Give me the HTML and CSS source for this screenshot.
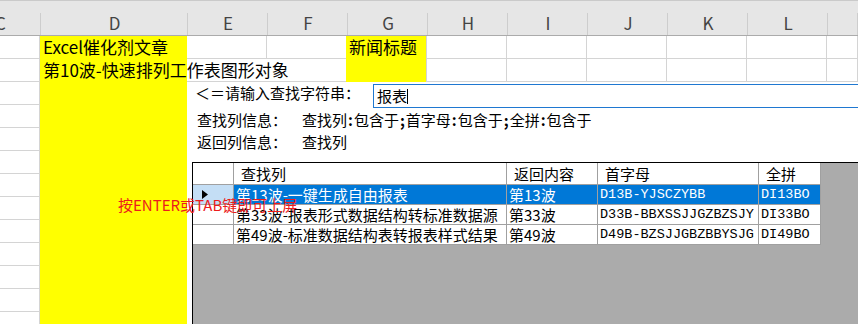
FILE: index.html
```html
<!DOCTYPE html>
<html lang="zh-CN">
<head>
<meta charset="UTF-8">
<title>Excel催化剂 - 快速查找</title>
<link rel="stylesheet" href="styles.css">
</head>
<body>
<div class="sheet">
  <div class="col-heads">
    <div class="col-head w-c">C</div>
    <div class="col-head w-d">D</div>
    <div class="col-head">E</div>
    <div class="col-head">F</div>
    <div class="col-head">G</div>
    <div class="col-head">H</div>
    <div class="col-head">I</div>
    <div class="col-head">J</div>
    <div class="col-head">K</div>
    <div class="col-head">L</div>
    <div class="col-head rest"></div>
  </div>
  <div class="cols">
    <div class="col w-c"></div>
    <div class="col w-d fill">
      <div class="cell">Excel催化剂文章</div>
      <div class="cell spill">第10波-快速排列工作表图形对象</div>
    </div>
    <div class="col"></div>
    <div class="col"></div>
    <div class="col"><div class="merge fill"><div class="cell">新闻标题</div></div></div>
    <div class="col"></div>
    <div class="col"></div>
    <div class="col"></div>
    <div class="col"></div>
    <div class="col"></div>
    <div class="col rest"></div>
  </div>
</div>

<div class="finder">
  <div class="search">
    <div class="search-label">＜＝请输入查找字符串：</div>
    <div class="search-box">报表<span class="caret"></span></div>
  </div>
  <div class="info first">
    <div>查找列信息：</div>
    <div>查找列<span class="p">:</span>包含于<span class="p">;</span>首字母<span class="p">:</span>包含于<span class="p">;</span>全拼<span class="p">:</span>包含于</div>
  </div>
  <div class="info">
    <div>返回列信息：</div>
    <div>查找列</div>
  </div>
  <div class="grid-wrap">
    <div class="dgv">
      <div class="rh"></div>
      <div class="ch">查找列</div>
      <div class="ch">返回内容</div>
      <div class="ch">首字母</div>
      <div class="ch">全拼</div>

      <div class="rh current"><svg width="6" height="9" viewBox="0 0 6 9"><path d="M0 0 L6 4.5 L0 9 Z" fill="#000"/></svg></div>
      <div class="sel">第13波-一键生成自由报表</div>
      <div class="sel">第13波</div>
      <div class="sel code">D13B-YJSCZYBB</div>
      <div class="sel code">DI13BO</div>

      <div class="rh"></div>
      <div>第33波-报表形式数据结构转标准数据源</div>
      <div>第33波</div>
      <div class="code">D33B-BBXSSJJGZBZSJY</div>
      <div class="code">DI33BO</div>

      <div class="rh"></div>
      <div>第49波-标准数据结构表转报表样式结果</div>
      <div>第49波</div>
      <div class="code">D49B-BZSJJGBZBBYSJG</div>
      <div class="code">DI49BO</div>
    </div>
  </div>
</div>

<div class="hint">按ENTER或TAB键即可上屏</div>
</body>
</html>
```

FILE: styles.css
```css
* {
  box-sizing: border-box;
}
body {
  margin: 0;
  width: 858px;
  height: 324px;
  overflow: hidden;
  position: relative;
  background: #fff;
  color: #000;
  font-family: "Noto Sans CJK SC", "Noto Sans", sans-serif;
}

/* worksheet */
.sheet {
  margin-left: -40px;
}
.col-heads {
  display: flex;
  height: 36px;
  background: #e6e6e6;
  border-top: 1px solid #cacaca;
  border-bottom: 1px solid #ababab;
}
.col-head {
  flex: none;
  width: 80px;
  padding-top: 11px;
  text-align: center;
  font-size: 17px;
  line-height: 22px;
  color: #444;
  background: linear-gradient(#cdcdcd, #cdcdcd) right bottom / 1px 22px no-repeat;
}
.w-c {
  width: 81px;
}
.w-d {
  width: 147px;
}
.rest {
  flex: 1;
}
.cols {
  display: flex;
  height: 288px;
}
.col {
  flex: none;
  width: 80px;
  border-right: 1px solid #d4d4d4;
  background: repeating-linear-gradient(to bottom, #fff 0 22px, #d4d4d4 22px 23px);
}
.col.w-d {
  width: 147px;
}
.col.rest {
  flex: 1;
}
.fill {
  background: #ffff00;
  border-color: #ffff00;
}
.merge {
  height: 46px;
  margin-left: -1px;
}
.cell {
  position: relative;
  z-index: 1;
  height: 23px;
  padding-left: 3px;
  font-size: 17px;
  line-height: 22px;
  white-space: nowrap;
}
.spill {
  width: 306px;
  height: 22px;
  background: linear-gradient(to right, transparent 147px, #fff 147px);
}

/* finder form */
.finder {
  position: absolute;
  left: 187px;
  top: 82px;
  right: 0;
  bottom: 0;
  display: flex;
  flex-direction: column;
  padding-left: 8px;
  background: #fff;
  font-size: 15px;
}
.search {
  display: flex;
  padding-top: 2px;
}
.search-label {
  flex: none;
  width: 178px;
  line-height: 18px;
}
.search-box {
  flex: none;
  width: 520px;
  height: 24px;
  padding-left: 3px;
  border: 1px solid #1f78d1;
  line-height: 21px;
}
.caret {
  display: inline-block;
  width: 1px;
  height: 15px;
  vertical-align: -2px;
  background: #000;
}
.info {
  display: grid;
  grid-template-columns: 105px auto;
  padding-left: 2px;
  line-height: 22px;
  white-space: nowrap;
}
.info.first {
  margin-top: 1px;
}
.info .p {
  padding: 0 1px;
  font-weight: bold;
}
.grid-wrap {
  flex: 1;
  margin-top: 9px;
  margin-left: -3px;
  background: #ababab;
  border-top: 1px solid #000;
  border-left: 1px solid #000;
}
.dgv {
  display: grid;
  grid-template-columns: 41px 273px 91px 161px 62px;
  grid-template-rows: 22px repeat(3, 20px);
  width: max-content;
}
.dgv > div {
  padding-left: 2px;
  border-right: 1px solid #a0a0a0;
  border-bottom: 1px solid #a0a0a0;
  background: #fff;
  font-size: 15px;
  line-height: 19px;
  white-space: nowrap;
  overflow: hidden;
}
.dgv > .ch {
  padding-left: 7px;
  line-height: 21px;
}
.dgv > .rh {
  padding: 0;
}
.dgv > .rh.current {
  padding: 5px 0 0 9px;
  background: #c4def5;
}
.rh svg {
  display: block;
}
.dgv > .sel {
  background: #0078d7;
  color: #fff;
}
.dgv > .code {
  font-family: "Liberation Mono", monospace;
  font-size: 13.5px;
}

.hint {
  position: absolute;
  left: 118px;
  top: 196px;
  z-index: 2;
  color: #ec1c1c;
  font-size: 15px;
  line-height: 18px;
  white-space: nowrap;
}
```
